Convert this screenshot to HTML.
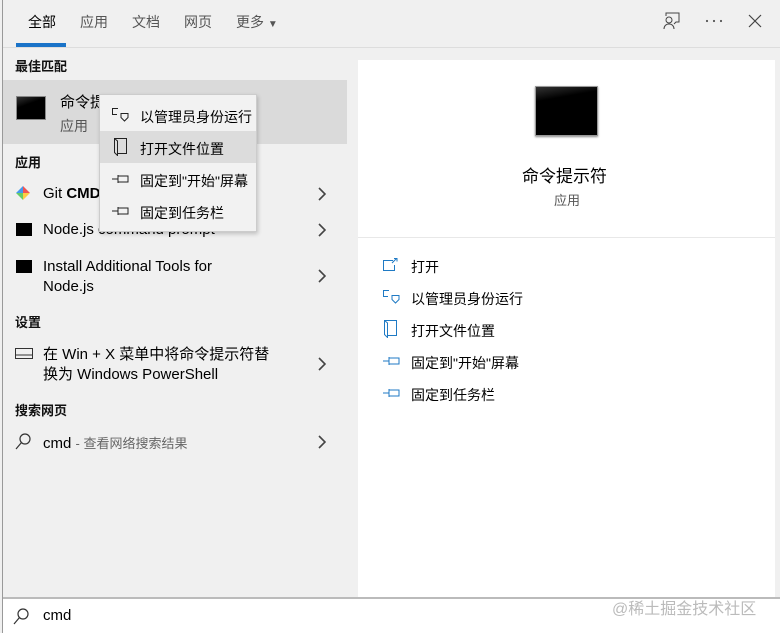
<!DOCTYPE html>
<html><head><meta charset="utf-8"><style>
*{margin:0;padding:0;box-sizing:border-box}
body{width:780px;height:633px;overflow:hidden;background:#f0f0f0;font-family:"Liberation Sans","Noto Sans CJK SC",sans-serif;color:#000;position:relative}
.a{position:absolute;white-space:nowrap}
.t{font-size:14px;color:#333}
.h{font-size:13px;font-weight:bold;color:#111}
.f{font-size:15px}
.ch{position:absolute;left:317px}
</style></head><body>
<div class="a" style="left:2px;top:0;width:1px;height:633px;background:#999"></div>
<div class="a" style="left:3px;top:47px;width:777px;height:1px;background:#ddd"></div>
<div class="a t" style="left:28px;top:12px;color:#000">全部</div>
<div class="a" style="left:16px;top:43px;width:50px;height:4px;background:#1a73c8"></div>
<div class="a t" style="left:80px;top:12px;color:#555">应用</div>
<div class="a t" style="left:132px;top:12px;color:#555">文档</div>
<div class="a t" style="left:184px;top:12px;color:#555">网页</div>
<div class="a t" style="left:236px;top:12px;color:#555">更多 <span style="font-size:10px">▼</span></div>
<svg class="a" style="left:662px;top:12px" width="20" height="18" viewBox="0 0 20 18" fill="none" stroke="#444" stroke-width="1"><circle cx="7" cy="8" r="3"/><path d="M2 17c0-3 2-5 5-5s5 2 5 5M4 4V1h13v9h-3l-2 2"/></svg>
<svg class="a" style="left:704px;top:19px" width="20" height="4" fill="#555"><circle cx="3" cy="2" r="1.1"/><circle cx="10" cy="2" r="1.1"/><circle cx="17" cy="2" r="1.1"/></svg>
<svg class="a" style="left:748px;top:14px" width="14" height="14" stroke="#444" stroke-width="1.2"><path d="M1 1l12 12M13 1L1 13"/></svg>

<div class="a h" style="left:15px;top:56px">最佳匹配</div>
<div class="a" style="left:3px;top:80px;width:344px;height:64px;background:#dadada"></div>
<div class="a" style="left:16px;top:96px;width:30px;height:24px;background:linear-gradient(160deg,#333 0,#000 35%);border:1px solid #888"></div>
<div class="a f" style="left:60px;top:91px">命令提示符</div>
<div class="a t" style="left:60px;top:116px;color:#555">应用</div>

<div class="a h" style="left:15px;top:152px">应用</div>
<svg class="a" style="left:15px;top:185px" width="16" height="16"><path d="M8 1l7 7H8z" fill="#e55"/><path d="M15 8l-7 7V8z" fill="#fc4"/><path d="M8 15L1 8h7z" fill="#6c6"/><path d="M1 8l7-7v7z" fill="#49e"/></svg>
<div class="a f" style="left:43px;top:185px">Git <b>CMD</b></div>
<svg class="ch" style="top:187px" width="9" height="14" fill="none" stroke="#444" stroke-width="1.6"><path d="M2 1l6 6-6 6"/></svg>
<div class="a" style="left:16px;top:223px;width:16px;height:13px;background:#000"></div>
<div class="a f" style="left:43px;top:221px">Node.js command prompt</div>
<svg class="ch" style="top:223px" width="9" height="14" fill="none" stroke="#444" stroke-width="1.6"><path d="M2 1l6 6-6 6"/></svg>
<div class="a" style="left:16px;top:260px;width:16px;height:13px;background:#000"></div>
<div class="a f" style="left:43px;top:257px;line-height:20px">Install Additional Tools for<br>Node.js</div>
<svg class="ch" style="top:269px" width="9" height="14" fill="none" stroke="#444" stroke-width="1.6"><path d="M2 1l6 6-6 6"/></svg>
<div class="a h" style="left:15px;top:312px">设置</div>
<svg class="a" style="left:15px;top:348px" width="18" height="12" fill="none" stroke="#333"><rect x=".5" y=".5" width="17" height="10"/><path d="M1 7h16"/></svg>
<div class="a f" style="left:43px;top:345px;line-height:20px">在 Win + X 菜单中将命令提示符替<br>换为 Windows PowerShell</div>
<svg class="ch" style="top:357px" width="9" height="14" fill="none" stroke="#444" stroke-width="1.6"><path d="M2 1l6 6-6 6"/></svg>
<div class="a h" style="left:15px;top:400px">搜索网页</div>
<svg class="a" style="left:15px;top:433px" width="16" height="17" fill="none" stroke="#333" stroke-width="1.2"><circle cx="10" cy="6" r="5"/><path d="M6.5 9.5L1 16"/></svg>
<div class="a f" style="left:43px;top:433px">cmd <span style="font-size:13px;color:#666">- 查看网络搜索结果</span></div>
<svg class="ch" style="top:435px" width="9" height="14" fill="none" stroke="#444" stroke-width="1.6"><path d="M2 1l6 6-6 6"/></svg>

<div class="a" style="left:358px;top:60px;width:417px;height:538px;background:#fff"></div>
<div class="a" style="left:358px;top:237px;width:417px;height:1px;background:#e8e8e8"></div>
<div class="a" style="left:535px;top:86px;width:63px;height:50px;background:linear-gradient(170deg,#333 0,#000 25%);border:1px solid #999;box-shadow:0 1px 2px #888"></div>
<div class="a" style="left:522px;top:162px;font-size:17px">命令提示符</div>
<div class="a" style="left:554px;top:190px;font-size:13px;color:#555">应用</div>
<svg class="a" style="left:383px;top:258px" width="16" height="14" fill="none" stroke="#1f7ac4"><path d="M10 2.5H.5v10h11V7M9 5l5-5M11 .5h3v3"/></svg>
<div class="a t" style="left:411px;top:257px;color:#000">打开</div>
<svg class="a" style="left:383px;top:290px" width="18" height="14" fill="none" stroke="#1f7ac4"><path d="M6 .5H.5v6H5M9 5.5h7v4l-3.5 3.5L9 9.5z"/></svg>
<div class="a t" style="left:411px;top:289px;color:#000">以管理员身份运行</div>
<svg class="a" style="left:384px;top:320px" width="14" height="18" fill="none" stroke="#1f7ac4"><path d="M.5.5h12v15H4M.5.5v14l3 3V3z"/></svg>
<div class="a t" style="left:411px;top:321px;color:#000">打开文件位置</div>
<svg class="a" style="left:383px;top:355px" width="18" height="12" fill="none" stroke="#1f7ac4"><path d="M0 6h6M6 2v8M6 3h10v6H6"/></svg>
<div class="a t" style="left:411px;top:353px;color:#000">固定到"开始"屏幕</div>
<svg class="a" style="left:383px;top:387px" width="18" height="12" fill="none" stroke="#1f7ac4"><path d="M0 6h6M6 2v8M6 3h10v6H6"/></svg>
<div class="a t" style="left:411px;top:385px;color:#000">固定到任务栏</div>

<div class="a" style="left:99px;top:94px;width:158px;height:138px;background:#f2f2f2;border:1px solid #ccc;box-shadow:1px 2px 4px rgba(0,0,0,.2)"></div>
<div class="a" style="left:100px;top:131px;width:156px;height:32px;background:#dcdcdc"></div>
<svg class="a" style="left:112px;top:108px" width="18" height="14" fill="none" stroke="#222"><path d="M6 .5H.5v6H5M9 5.5h7v4l-3.5 3.5L9 9.5z"/></svg>
<div class="a t" style="left:140px;top:107px;color:#000">以管理员身份运行</div>
<svg class="a" style="left:114px;top:138px" width="14" height="18" fill="none" stroke="#222"><path d="M.5.5h12v15H4M.5.5v14l3 3V3z"/></svg>
<div class="a t" style="left:140px;top:139px;color:#000">打开文件位置</div>
<svg class="a" style="left:112px;top:173px" width="18" height="12" fill="none" stroke="#222"><path d="M0 6h6M6 2v8M6 3h10v6H6"/></svg>
<div class="a t" style="left:140px;top:171px;color:#000">固定到"开始"屏幕</div>
<svg class="a" style="left:112px;top:205px" width="18" height="12" fill="none" stroke="#222"><path d="M0 6h6M6 2v8M6 3h10v6H6"/></svg>
<div class="a t" style="left:140px;top:203px;color:#000">固定到任务栏</div>

<div class="a" style="left:3px;top:597px;width:777px;height:36px;background:#fff;border-top:2px solid #bbb"></div>
<svg class="a" style="left:13px;top:608px" width="16" height="17" fill="none" stroke="#333" stroke-width="1.2"><circle cx="10" cy="6" r="5"/><path d="M6.5 9.5L1 16"/></svg>
<div class="a f" style="left:43px;top:607px">cmd</div>
<div class="a" style="left:612px;top:595px;font-size:16px;color:#bbb">@稀土掘金技术社区</div>
</body></html>
